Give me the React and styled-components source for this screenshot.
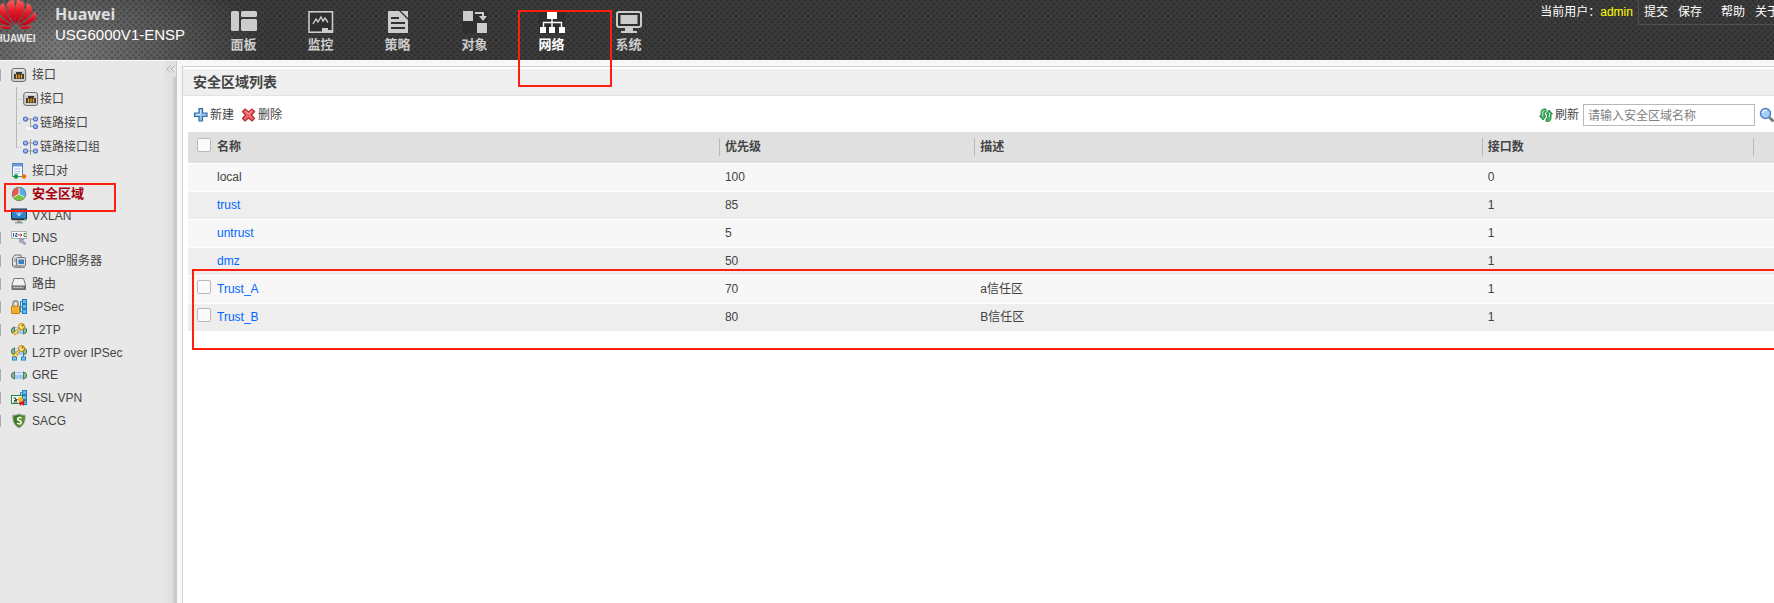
import React from 'react';
import styled, { createGlobalStyle } from 'styled-components';

const navItems = [
  { key: 'dashboard', label: '面板' },
  { key: 'monitor', label: '监控' },
  { key: 'policy', label: '策略' },
  { key: 'object', label: '对象' },
  { key: 'network', label: '网络', active: true },
  { key: 'system', label: '系统' },
];

const menuItems = [
  {
    icon: 'port',
    label: '接口',
    expandable: true,
    children: [
      { icon: 'port', label: '接口' },
      { icon: 'link', label: '链路接口' },
      { icon: 'linkGroup', label: '链路接口组' },
    ],
  },
  { icon: 'pair', label: '接口对' },
  { icon: 'zone', label: '安全区域', active: true },
  { icon: 'vxlan', label: 'VXLAN', size: 'small' },
  { icon: 'dns', label: 'DNS', expandable: true },
  { icon: 'dhcp', label: 'DHCP服务器', expandable: true },
  { icon: 'route', label: '路由', expandable: true },
  { icon: 'ipsec', label: 'IPSec', expandable: true },
  { icon: 'l2tp', label: 'L2TP', expandable: true },
  { icon: 'l2tpIpsec', label: 'L2TP over IPSec' },
  { icon: 'gre', label: 'GRE', expandable: true, size: 'small' },
  { icon: 'ssl', label: 'SSL VPN', expandable: true, size: 'large' },
  { icon: 'sacg', label: 'SACG', expandable: true, size: 'small' },
];

const zones = [
  { name: 'local', priority: 100, desc: '', count: 0, fixed: true },
  { name: 'trust', priority: 85, desc: '', count: 1 },
  { name: 'untrust', priority: 5, desc: '', count: 1 },
  { name: 'dmz', priority: 50, desc: '', count: 1 },
  { name: 'Trust_A', priority: 70, desc: 'a信任区', count: 1, custom: true },
  { name: 'Trust_B', priority: 80, desc: 'B信任区', count: 1, custom: true },
];

const rowHeights = { small: 21, normal: 23, large: 25 };

const navIcons = {
  dashboard: (
    <>
      <rect x="0" y="0" width="8" height="20" rx="1.5" />
      <rect x="10" y="0" width="16" height="6" rx="1.5" />
      <rect x="10" y="8" width="16" height="12" rx="1.5" />
    </>
  ),
  monitor: (
    <>
      <rect x="1" y="0.8" width="23.5" height="20.4" fill="#2f2f30" stroke="currentColor" strokeWidth="1.6" />
      <path d="M5 13l3-5 2 3 3-5 2 4 2-3 3 4.500" fill="none" stroke="currentColor" strokeWidth="1.4" />
      <path d="M14 17h6v2h5v3H14z" />
    </>
  ),
  policy: (
    <>
      <path d="M3 0h11l9 9v13H3z" />
      <path d="M16 0h7v7z" />
      <path d="M6 7h8M6 12h14M6 17h14" stroke="#333334" strokeWidth="2" />
    </>
  ),
  object: (
    <>
      <rect width="26" height="22" fill="#2f2f30" />
      <rect x="1" y="0" width="10" height="10" />
      <rect x="15" y="12" width="10" height="10" />
      <path d="M13 2h8v5" fill="none" stroke="currentColor" strokeWidth="2" />
      <path d="M17 5h8l-4 5z" />
    </>
  ),
  network: (
    <>
      <rect width="26" height="22" fill="#2f2f30" />
      <rect x="8" y="0" width="10" height="8" />
      <path d="M13 8v8M4.500 16v-4.500h18V16" fill="none" stroke="currentColor" strokeWidth="1.4" />
      <rect x="1" y="16" width="6" height="6" />
      <rect x="10" y="16" width="6" height="6" />
      <rect x="20" y="16" width="6" height="6" />
    </>
  ),
  system: (
    <>
      <rect x="1" y="1" width="24" height="15" rx="2" fill="#2f2f30" stroke="currentColor" strokeWidth="2" />
      <rect x="4.500" y="4" width="17" height="9" />
      <path d="M9 17h8v3h4v2H5v-2h4z" />
    </>
  ),
};

const Node = ({ x, y }) => (
  <circle cx={x} cy={y} r="2" fill="#a9c2f5" stroke="#4a6cc4" strokeWidth="1.1" />
);

const Tunnel = () => (
  <>
    <rect x="0.500" y="5.500" width="15" height="6" rx="2.500" fill="#8cc07f" stroke="#3c7a3a" />
    <rect x="3.500" y="5" width="9" height="7" fill="#a4c9f3" />
    <path d="M4 7h8" stroke="#e0eeff" strokeWidth="1.500" />
    <path d="M3.500 4.500v8M12.500 4.500v8" stroke="#5d7280" />
  </>
);

const GoldKey = () => (
  <>
    <path d="M9 6.500L2.500 12M4.500 10.500l1.500 2" stroke="#b37d05" strokeWidth="2.800" />
    <path d="M9 6.500L2.500 12M4.500 10.500l1.500 2" stroke="#ffe07a" strokeWidth="1.400" />
    <circle cx="10.500" cy="4.500" r="3" fill="#ffe07a" stroke="#b37d05" />
    <circle cx="11.500" cy="3.500" r="1" fill="#8a5d00" />
  </>
);

const Servers = () => (
  <g fill="#63bdf0" stroke="#1f7fbd">
    <rect x="11.500" y="0.500" width="4" height="4" />
    <rect x="11.500" y="5.500" width="4" height="4" />
    <rect x="11.500" y="10.500" width="4" height="4" />
    <path d="M8.500 8h3M9.500 2.500v10.500M9.500 2.500h2M9.500 13h2" fill="none" />
  </g>
);

const menuIcons = {
  port: (
    <>
      <rect x="0.700" y="1.500" width="14" height="13" rx="2.500" fill="#cfcfcf" stroke="#6b6b6b" />
      <path d="M2 3h11" stroke="#fff" />
      <path d="M3 12V7h2V5h6v2h2v5z" fill="#3c3835" />
      <path d="M5.500 7.500v4M8 7.500v4M10.500 7.500v4" stroke="#f5a81c" strokeWidth="1.300" />
    </>
  ),
  link: (
    <>
      <path d="M3 13.500h9" stroke="#fafafa" strokeWidth="2" />
      <path d="M4 4h8M7.500 4v7.500H12" fill="none" stroke="#999" />
      <Node x={2.5} y={4} />
      <Node x={12.5} y={4} />
      <Node x={12.5} y={11.5} />
    </>
  ),
  linkGroup: (
    <>
      <path d="M7.500 0v16" stroke="#999" />
      <path d="M3 4h9M3 12h9" stroke="#999" />
      <Node x={2.5} y={4} />
      <Node x={12.5} y={4} />
      <Node x={2.5} y={12} />
      <Node x={12.5} y={12} />
    </>
  ),
  pair: (
    <>
      <rect x="1.500" y="0.500" width="10" height="13" fill="#f8fbff" stroke="#5c83ba" />
      <rect x="2" y="1" width="9" height="2.500" fill="#6d9edb" />
      <path d="M3.500 6h6M3.500 8.500h6M3.500 10.500h5" stroke="#a7bddb" />
      <circle cx="5" cy="13.500" r="2.200" fill="#119b2e" />
      <circle cx="13" cy="13.500" r="2.200" fill="#ef6c0c" />
    </>
  ),
  zone: (
    <>
      <circle cx="8" cy="8" r="7" fill="#74c441" />
      <path d="M8 8V1a7 7 0 0 1 6 10.500z" fill="#58aaf0" />
      <path d="M8 8L2 11.500A7 7 0 0 1 8 1z" fill="#ea5a50" />
      <path d="M8 1v7l6 3.500M8 8l-6 3.500" fill="none" stroke="#fff" strokeWidth="0.800" />
      <circle cx="8" cy="8" r="6.800" fill="none" stroke="#6c7c70" strokeWidth="0.700" />
    </>
  ),
  vxlan: (
    <>
      <rect x="0.500" y="1" width="15" height="10" fill="#2c84cf" stroke="#26313e" />
      <path d="M8 3v5M5 4.500l3 3 3-3" fill="none" stroke="#e4f4ff" />
      <path d="M1 11.500h14" stroke="#333" strokeWidth="1.500" />
      <rect x="13" y="11" width="2" height="1.500" fill="#3ac54b" />
      <path d="M6 12.500h4v1.500h2v1.500H4V14h2z" fill="#999" />
    </>
  ),
  dns: (
    <>
      <rect x="0.500" y="1.500" width="15" height="7" fill="#fff" stroke="#b0b0b0" />
      <path d="M2.500 3v4M4.500 3.500h1.500v1.500H4.500v1.500h2" fill="none" stroke="#235fb1" />
      <path d="M7 5h4M9.500 3.500L11 5 9.500 6.500" fill="none" stroke="#d12424" />
      <path d="M15 3.500h-2v3h2" fill="none" stroke="#279537" />
      <path d="M8 8.500l5 .5-1 1.500 3 3-1.500 1.500-3-3-1.500 1z" fill="#a3aabd" stroke="#7b849b" strokeWidth="0.500" />
    </>
  ),
  dhcp: (
    <>
      <path d="M1.500 13V5l2.500-3h6v11z" fill="#e3e4e5" stroke="#707070" />
      <path d="M3 6h3M3 8h3" stroke="#828282" />
      <rect x="5.500" y="4.500" width="9" height="8.500" rx="1" fill="#d7dce1" stroke="#6d7780" />
      <rect x="7.500" y="6.500" width="5.500" height="4.500" fill="#3f81bc" />
      <path d="M3 14.500h11" stroke="#8a8a8a" />
    </>
  ),
  route: (
    <>
      <path d="M3 2.500h9.500l2 6.500v4.500H1V9z" fill="#f1f1f1" stroke="#777" />
      <path d="M1 9.500h13.500v4H1z" fill="#666" />
      <path d="M2.500 11.500h10" stroke="#ddd" strokeWidth="1.500" strokeDasharray="2 1" />
    </>
  ),
  ipsec: (
    <>
      <path d="M2 8V4.500a2.500 2.500 0 0 1 5 0V8" fill="none" stroke="#999" strokeWidth="1.800" />
      <rect x="0.500" y="7" width="8" height="7.500" rx="0.500" fill="#fbc13c" stroke="#c27a08" />
      <path d="M2 9h5M2 11h5M2 13h5" stroke="#de951e" />
      <Servers />
    </>
  ),
  l2tp: (
    <>
      <Tunnel />
      <GoldKey />
    </>
  ),
  l2tpIpsec: (
    <>
      <g transform="translate(0 -2)">
        <Tunnel />
      </g>
      <path d="M3.500 10v2M12.500 10v2" stroke="#277cb2" />
      <rect x="1.500" y="12" width="4" height="3" fill="#8fd0f5" stroke="#1f7fbd" />
      <rect x="10.500" y="12" width="4" height="3" fill="#8fd0f5" stroke="#1f7fbd" />
      <g transform="translate(0 -1)">
        <GoldKey />
      </g>
    </>
  ),
  gre: <Tunnel />,
  ssl: (
    <>
      <Servers />
      <rect x="0.500" y="5.500" width="11" height="8" fill="#f3fff3" stroke="#26864a" />
      <path d="M2.500 8h2v1.500h2M2.500 12h4M3 10.500h3" fill="none" stroke="#2b4937" />
      <path d="M8 11l1 5 2-2 2 2 .5-5z" fill="#d91818" />
      <circle cx="9.500" cy="9.500" r="2.500" fill="#ffae19" />
    </>
  ),
  sacg: (
    <>
      <path d="M8 1c2 1 4 1.500 6 1 .6 6-1 10-6 13C3 12 1.400 8 2 2c2 .5 4 0 6-1z" fill="#3c7d24" stroke="#a5a5a5" />
      <path d="M8 2.500c1.500 1 3 1 5 1 0 5-1 8-5 10z" fill="#5c9a35" />
      <path d="M10.500 5C8 3.500 5.500 5.500 7 7c2 1 4 1 3 3-1 1.500-3 1-4 0" fill="none" stroke="#fff" strokeWidth="1.400" />
    </>
  ),
};

const MenuIcon = ({ name }) => (
  <SmallIcon viewBox="0 0 16 16" aria-hidden="true">
    {menuIcons[name]}
  </SmallIcon>
);

const Flower = () => (
  <svg width="41" height="31" viewBox="0 0 41 31" aria-hidden="true">
    <defs>
      <linearGradient id="petal" x1="0" y1="0" x2="0" y2="1">
        <stop offset="0" stopColor="#f4625e" />
        <stop offset="0.500" stopColor="#e01524" />
        <stop offset="1" stopColor="#b80012" />
      </linearGradient>
    </defs>
    <g fill="url(#petal)">
      <path d="M20 24C15 17 10 10 12 4c1-3 4-4 7-4 2 7 2 16 1 24z" />
      <path d="M21 24c5-7 10-14 8-20-1-3-4-4-7-4-2 7-2 16-1 24z" />
      <path d="M18.500 24.500C10 20 3 14 4 8c1-3 3-4 5-5 1 8 5 15 9.500 21.500z" />
      <path d="M22.500 24.500C31 20 38 14 37 8c-1-3-3-4-5-5-1 8-5 15-9.500 21.500z" />
      <path d="M17.500 25.500C9 26 2 22 0 18c-1-3 0-5 1-7 4 7 10 11 16.500 14.500z" />
      <path d="M23.500 25.500C32 26 39 22 41 18c1-3 0-5-1-7-4 7-10 11-16.500 14.500z" />
      <path d="M17 26.500c-3 4-10 4-13.500-2 5 2 9 2 13.500 2z" />
      <path d="M24 26.500c3 4 10 4 13.500-2-5 2-9 2-13.500 2z" />
    </g>
  </svg>
);

const PlusIcon = () => (
  <SmallIcon viewBox="0 0 16 16" aria-hidden="true">
    <path d="M6 1.500h3.500V6h4.500v3.500H9.500V14H6V9.500H1.500V6H6z" fill="#8fbfe8" stroke="#336ca6" strokeWidth="1.200" />
    <path d="M7.500 3v4.500H3" fill="none" stroke="#d5eaff" />
  </SmallIcon>
);

const CrossIcon = () => (
  <SmallIcon viewBox="0 0 16 16" aria-hidden="true">
    <path
      d="M4 2l3.500 3L11 2l2.500 2.500L10.500 8l3 3.500L11 14l-3.500-3L4 14l-2.500-2.500L4.500 8l-3-3.500z"
      fill="#ee6467"
      stroke="#b42a31"
      strokeWidth="1.200"
    />
    <path d="M4 3.500l3.500 3.500L11 3.500" fill="none" stroke="#ffb1ac" />
  </SmallIcon>
);

const RefreshIcon = () => (
  <SmallIcon viewBox="0 0 16 16" aria-hidden="true">
    <path d="M3 8V5.500C3 3 4.500 1.500 8 2v3c-1.500 0-1.500.5-1.500 1.500V9h1.500l-3 4-3.500-4H3z" fill="#43b667" stroke="#147a36" strokeWidth="0.800" />
    <path d="M13 8v3c0 2.500-1.500 4-5 3.500V11.500c1.500 0 1.500-.5 1.500-1.500V7H8l3-4 3.500 4H13z" fill="#43b667" stroke="#147a36" strokeWidth="0.800" />
    <path d="M4.500 9V6c0-2 1-2.500 2-2.500M11.500 6v4.500" fill="none" stroke="#a8edb8" />
  </SmallIcon>
);

const SearchIcon = () => (
  <SmallIcon viewBox="0 0 16 16" aria-hidden="true">
    <path d="M10.500 10.500l4 4" stroke="#767a82" strokeWidth="3" />
    <circle cx="6.500" cy="6.500" r="5" fill="#a5cdfa" stroke="#5480c5" strokeWidth="1.500" />
    <path d="M3.500 6a3 3 0 0 1 4-2.500" fill="none" stroke="#fff" strokeWidth="1.300" />
  </SmallIcon>
);

const TopBar = () => (
  <Header>
    <Brand>
      <Logo>
        <Flower />
        <LogoText>HUAWEI</LogoText>
      </Logo>
      <Product>
        <Vendor>Huawei</Vendor>
        <Model>USG6000V1-ENSP</Model>
      </Product>
    </Brand>
    <Nav>
      {navItems.map(({ key, label, active }) => (
        <NavItem key={key} href={`#${key}`} $active={active}>
          <NavIcon viewBox="0 0 26 22" aria-hidden="true">
            {navIcons[key]}
          </NavIcon>
          {label}
          {active && <NavMark />}
        </NavItem>
      ))}
    </Nav>
    <UserBar>
      <CurrentUser>
        当前用户：<UserName>admin</UserName>
      </CurrentUser>
      <UserLinks>
        <UserLink href="#commit">提交</UserLink>
        <UserLink href="#save">保存</UserLink>
        <HelpLink href="#help">帮助</HelpLink>
        <UserLink href="#about">关于</UserLink>
      </UserLinks>
    </UserBar>
  </Header>
);

const SideMenu = () => (
  <Sidebar>
    <Menu>
      {menuItems.map(({ icon, label, active, expandable, size, children }) => (
        <li key={label}>
          <MenuLink
            href={`#${icon}`}
            $height={rowHeights[size || 'normal']}
            $active={active}
            $expandable={expandable}
          >
            <MenuIcon name={icon} />
            {label}
            {active && <MenuMark />}
          </MenuLink>
          {children && (
            <SubMenu>
              {children.map((child) => (
                <SubItem key={child.label}>
                  <SubLink href={`#${child.icon}`}>
                    <MenuIcon name={child.icon} />
                    {child.label}
                  </SubLink>
                </SubItem>
              ))}
            </SubMenu>
          )}
        </li>
      ))}
    </Menu>
    <CollapseButton type="button" aria-label="收起">
      <svg width="10" height="8" viewBox="0 0 10 8" fill="none" stroke="#b5b5b5">
        <path d="M4.500 0.500L1 4l3.500 3.500M8.500 0.500L5 4l3.500 3.500" />
      </svg>
    </CollapseButton>
  </Sidebar>
);

const ZoneTable = () => (
  <TableArea>
    <Table>
      <colgroup>
        <CheckCol />
        <col />
        <PriorityCol />
        <DescCol />
        <CountCol />
        <TailCol />
      </colgroup>
      <thead>
        <tr>
          <CheckHead>
            <Checkbox type="checkbox" aria-label="全选" />
          </CheckHead>
          <HeadCell>名称</HeadCell>
          <HeadCell>优先级</HeadCell>
          <HeadCell>描述</HeadCell>
          <HeadCell>接口数</HeadCell>
          <CheckHead />
        </tr>
      </thead>
      <tbody>
        {zones.map(({ name, priority, desc, count, fixed, custom }) => (
          <Row key={name}>
            <CheckCell>
              {custom && <Checkbox type="checkbox" aria-label={name} />}
            </CheckCell>
            <Cell>{fixed ? name : <ZoneLink href={`#${name}`}>{name}</ZoneLink>}</Cell>
            <Cell>{priority}</Cell>
            <Cell>{desc}</Cell>
            <Cell>{count}</Cell>
            <Cell />
          </Row>
        ))}
      </tbody>
    </Table>
    <TableMark />
  </TableArea>
);

const App = () => (
  <Page>
    <GlobalStyle />
    <TopBar />
    <Body>
      <SideMenu />
      <Content>
        <Panel>
          <PanelTitle>安全区域列表</PanelTitle>
          <Toolbar>
            <ToolButton type="button">
              <PlusIcon />
              新建
            </ToolButton>
            <ToolButton type="button">
              <CrossIcon />
              删除
            </ToolButton>
            <SearchGroup>
              <ToolButton type="button">
                <RefreshIcon />
                刷新
              </ToolButton>
              <SearchInput
                type="text"
                aria-label="安全区域名称"
                placeholder="请输入安全区域名称"
              />
              <ToolButton type="button" aria-label="搜索">
                <SearchIcon />
              </ToolButton>
            </SearchGroup>
          </Toolbar>
          <ZoneTable />
        </Panel>
      </Content>
    </Body>
  </Page>
);

const GlobalStyle = createGlobalStyle`
  * {
    box-sizing: border-box;
  }
  body {
    margin: 0;
    color: #444444;
    font-family: 'Liberation Sans', 'Noto Sans CJK SC', sans-serif;
    font-size: 12px;
    line-height: 18px;
  }
  a {
    color: inherit;
    text-decoration: none;
  }
  ul {
    margin: 0;
    padding: 0;
    list-style: none;
  }
`;
const Page = styled.div`
  display: flex;
  flex-direction: column;
  min-height: 100vh;
  overflow: hidden;
`;
const Header = styled.header`
  display: flex;
  height: 60px;
  background-color: #3c3c3d;
  background-image: radial-gradient(circle at 1px 1px, rgba(0, 0, 0, 0.22) 1px, transparent 2px),
    radial-gradient(circle at 4px 4px, rgba(0, 0, 0, 0.22) 1px, transparent 2px),
    radial-gradient(ellipse 200px 100px at 60px 50px, #7c7c7c, transparent);
  background-size: 6px 6px, 6px 6px, 100% 100%;
`;
const Brand = styled.div`
  display: flex;
  flex: none;
  width: 205px;
  overflow: hidden;
`;
const Logo = styled.div`
  display: flex;
  flex-direction: column;
  align-items: center;
  width: 41px;
  margin-left: -5px;
`;
const LogoText = styled.span`
  color: #e6e6e6;
  font-size: 10px;
  font-weight: bold;
  line-height: 15px;
`;
const Product = styled.div`
  margin-left: 19px;
  padding-top: 4px;
`;
const Vendor = styled.div`
  color: #dddddd;
  font-family: 'Noto Sans', sans-serif;
  font-size: 16px;
  font-weight: bold;
  line-height: 20px;
`;
const Model = styled.div`
  color: #ffffff;
  font-size: 15px;
  line-height: 22px;
`;
const Nav = styled.nav`
  display: flex;
`;
const NavItem = styled.a`
  position: relative;
  display: flex;
  flex-direction: column;
  align-items: center;
  width: 77px;
  padding-top: 11px;
  color: ${({ $active }) => ($active ? '#ffffff' : '#cccccc')};
  font-size: 13px;
  font-weight: bold;
  line-height: 24px;
`;
const NavIcon = styled.svg`
  flex: none;
  width: 26px;
  height: 22px;
  fill: currentColor;
`;
/* red frames drawn over the parts to look at */
const Mark = styled.span`
  position: absolute;
  z-index: 1;
  border: 2px solid #ff1e12;
  pointer-events: none;
`;
const NavMark = styled(Mark)`
  top: 10px;
  left: 5px;
  width: 94px;
  height: 77px;
`;
const MenuMark = styled(Mark)`
  top: 1px;
  left: 4px;
  width: 112px;
  height: 29px;
`;
const TableMark = styled(Mark)`
  top: 137px;
  right: -10px;
  left: 4px;
  height: 81px;
`;
const UserBar = styled.div`
  display: flex;
  align-items: flex-start;
  margin-right: -5px;
  margin-left: auto;
  color: #ffffff;
  line-height: 24px;
  white-space: nowrap;
`;
const CurrentUser = styled.span`
  padding-right: 5px;
`;
const UserName = styled.span`
  color: #ffff00;
`;
const UserLinks = styled.div`
  display: flex;
  gap: 10px;
  padding-left: 5px;
  border-bottom: 1px solid #4e4e4f;
  border-left: 1px solid #4e4e4f;
`;
const UserLink = styled.a`
  color: #ffffff;
`;
const HelpLink = styled(UserLink)`
  margin-left: 9px;
`;
const Body = styled.div`
  display: flex;
  flex: 1;
`;
const Sidebar = styled.aside`
  display: flex;
  flex: none;
  justify-content: space-between;
  width: 177px;
  border-top: 1px solid #f7f7f7;
  background: linear-gradient(
    to right,
    #e8e8e8 162px,
    #dedede 173px,
    #c9c9c9 174px,
    #c9c9c9 177px
  );
`;
const Menu = styled.ul`
  flex: 1;
  padding-top: 2px;
`;
const SmallIcon = styled.svg`
  flex: none;
  width: 16px;
  height: 16px;
`;
const MenuLink = styled.a`
  position: relative;
  display: flex;
  align-items: center;
  gap: 5px;
  height: ${({ $height }) => $height}px;
  padding-left: 11px;
  background: ${({ $expandable }) =>
    $expandable
      ? 'linear-gradient(#a9adb3, #a9adb3) left center / 1px 12px no-repeat'
      : 'none'};
  color: ${({ $active }) => ($active ? '#a60010' : 'inherit')};
  font-size: ${({ $active }) => ($active ? 13 : 12)}px;
  font-weight: ${({ $active }) => ($active ? 'bold' : 'normal')};
`;
const SubMenu = styled.ul`
  padding-top: 1px;
  margin-left: 16px;
`;
const SubItem = styled.li`
  height: 24px;
  padding-left: 7px;
  background: linear-gradient(#b8b8b8, #b8b8b8) left top / 1px 100% no-repeat,
    repeating-linear-gradient(to right, #b8b8b8 0 1px, transparent 1px 2px) left center / 6px
      1px no-repeat;

  &:last-child {
    background-size: 1px 50%, 6px 1px;
  }
`;
const SubLink = styled.a`
  display: flex;
  align-items: center;
  gap: 1px;
  height: 24px;
`;
const CollapseButton = styled.button`
  flex: none;
  width: 11px;
  height: 16px;
  margin-right: 1px;
  padding: 0;
  border: 0;
  background: #e1e1e1;
  line-height: 0;
`;
const Content = styled.main`
  display: flex;
  flex: 1;
  min-width: 0;
  padding: 6px 0 0 5px;
  background: #f7f7f7;
`;
const Panel = styled.section`
  flex: 1;
  min-width: 0;
  padding-top: 2px;
  border-top: 1px solid #d3d3d3;
  border-left: 1px solid #d3d3d3;
  background: #ffffff;
`;
const PanelTitle = styled.h2`
  height: 27px;
  margin: 0;
  padding-left: 10px;
  border-bottom: 1px solid #e3e3e3;
  background: #efefef;
  font-size: 14px;
  line-height: 26px;
`;
const Toolbar = styled.div`
  display: flex;
  align-items: center;
  gap: 7px;
  height: 36px;
  padding: 2px 0 0 10px;
`;
const ToolButton = styled.button`
  display: flex;
  flex: none;
  align-items: center;
  gap: 1px;
  padding: 0;
  border: 0;
  background: none;
  color: inherit;
  font: inherit;
`;
const SearchGroup = styled.div`
  display: flex;
  align-items: center;
  gap: 4px;
  margin-right: -1px;
  margin-left: auto;
`;
const SearchInput = styled.input`
  width: 172px;
  height: 22px;
  padding: 2px 4px 0;
  border: 1px solid #b5b8bc;
  background: #ffffff;
  font: inherit;

  &::placeholder {
    color: #808080;
  }
`;
const TableArea = styled.div`
  position: relative;
  margin-left: 5px;
`;
const Table = styled.table`
  width: 100%;
  border-collapse: collapse;
  table-layout: fixed;
  text-align: left;
`;
const CheckCol = styled.col`
  width: 29px;
`;
const PriorityCol = styled.col`
  width: 16.1%;
`;
const DescCol = styled.col`
  width: 32%;
`;
const CountCol = styled.col`
  width: 17.1%;
`;
const TailCol = styled.col`
  width: 20px;
`;
const CheckHead = styled.td`
  height: 31px;
  padding: 0 0 0 9px;
  border-bottom: 1px solid #ffffff;
  background: #e0e0e0;
`;
const HeadCell = styled.th`
  height: 31px;
  padding: 0 0 0 5px;
  border-bottom: 1px solid #ffffff;
  background: linear-gradient(#b9b9b9, #b9b9b9) right center / 1px 18px no-repeat #e0e0e0;

  &:nth-child(2) {
    padding-left: 0;
  }
`;
const Row = styled.tr`
  background: #f7f7f7;

  &:nth-child(even) {
    background: #eeeeee;
  }
`;
const Cell = styled.td`
  height: 28px;
  padding: 0 0 0 5px;
  border-bottom: 1px solid #ffffff;

  &:nth-child(2) {
    padding-left: 0;
  }
`;
const CheckCell = styled(Cell)`
  padding-left: 9px;
`;
const Checkbox = styled.input`
  display: block;
  width: 14px;
  height: 14px;
  margin: 0 0 4px;
  border: 1px solid #b9b9b9;
  border-radius: 2px;
  background: #fafafa;
  appearance: none;

  &:checked {
    background: #0066ff;
  }
`;
const ZoneLink = styled.a`
  color: #0066ff;
`;

export default App;
